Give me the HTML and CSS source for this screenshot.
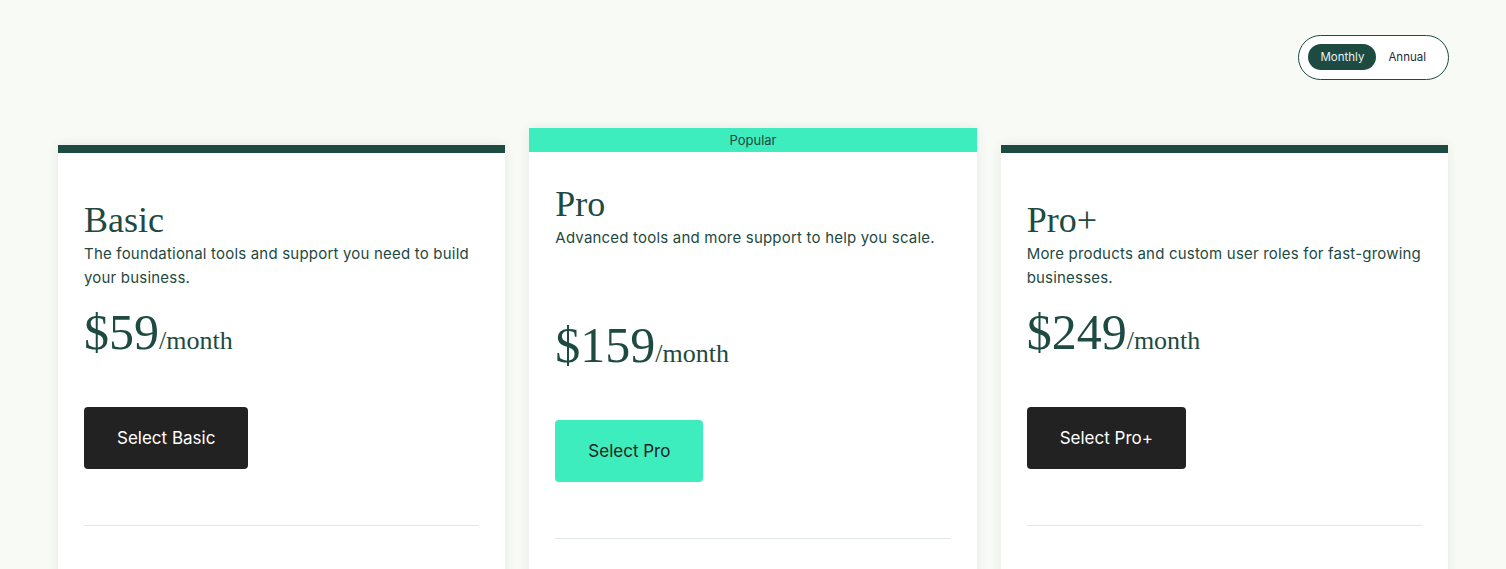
FILE: index.html
```html
<!DOCTYPE html>
<html lang="en">
<head>
<meta charset="utf-8">
<title>Pricing</title>
<link rel="stylesheet" href="styles.css">
</head>
<body>
<div class="page">
  <div class="toolbar">
    <div class="toggle">
      <span class="toggle-opt is-active">Monthly</span>
      <span class="toggle-opt">Annual</span>
    </div>
  </div>
  <div class="plans">
    <div class="card">
      <div class="card-bar"></div>
      <div class="card-body">
        <h2 class="plan-name">Basic</h2>
        <p class="plan-desc">The foundational tools and support you need to build your business.</p>
        <div class="price"><span class="amount">$59</span><span class="per">/month</span></div>
        <button class="btn btn-dark">Select Basic</button>
        <hr class="divider">
      </div>
    </div>
    <div class="card card-featured">
      <div class="card-banner">Popular</div>
      <div class="card-body">
        <h2 class="plan-name">Pro</h2>
        <p class="plan-desc">Advanced tools and more support to help you scale.</p>
        <div class="price"><span class="amount">$159</span><span class="per">/month</span></div>
        <button class="btn btn-teal">Select Pro</button>
        <hr class="divider">
      </div>
    </div>
    <div class="card">
      <div class="card-bar"></div>
      <div class="card-body">
        <h2 class="plan-name">Pro+</h2>
        <p class="plan-desc">More products and custom user roles for fast-growing businesses.</p>
        <div class="price"><span class="amount">$249</span><span class="per">/month</span></div>
        <button class="btn btn-dark">Select Pro+</button>
        <hr class="divider">
      </div>
    </div>
  </div>
</div>
</body>
</html>
```

FILE: styles.css
```css
html, body {
  margin: 0;
  padding: 0;
  background: #f8faf5;
  overflow: hidden;
}
.page {
  height: 569px;
  overflow: hidden;
  padding: 0 58px;
  font-family: "Inter", "Liberation Sans", sans-serif;
  color: #1d4a41;
}
.toolbar {
  display: flex;
  justify-content: flex-end;
  padding-top: 35px;
  margin-right: -1px;
}
.toggle {
  display: flex;
  border: 1px solid #1d4a41;
  border-radius: 24px;
  padding: 8px 10px 9px 9px;
  background: #ffffff;
}
.toggle-opt {
  display: flex;
  align-items: center;
  height: 26px;
  padding: 0 12px;
  border-radius: 13px;
  font-size: 11.5px;
  color: #1d2a3a;
}
.toggle-opt.is-active {
  background: #1d4a41;
  color: #e6f4ef;
}
.plans {
  display: grid;
  grid-template-columns: repeat(3, 1fr);
  gap: 24px;
  margin-top: 48px;
  align-items: start;
}
.card {
  background: #ffffff;
  box-shadow: 0 0 10px rgba(30, 70, 50, 0.09);
  margin-top: 17px;
  height: 600px;
}
.card-featured {
  margin-top: 0;
}
.card-bar {
  height: 8px;
  background: #1d4a41;
}
.card-banner {
  height: 24px;
  background: #3eedbe;
  color: #1d4a41;
  font-size: 13px;
  line-height: 24px;
  text-align: center;
}
.card-body {
  padding: 46px 26px 0 26px;
}
.card-featured .card-body {
  padding-top: 31px;
}
.plan-name {
  margin: 0;
  font-family: "Liberation Serif", serif;
  font-weight: 400;
  font-size: 36px;
  line-height: 43px;
  color: #1d4a41;
}
.plan-desc {
  margin: 0;
  font-size: 15px;
  line-height: 24px;
  letter-spacing: 0.2px;
  color: #1d4a41;
}
.price {
  margin-top: 17px;
  font-family: "Liberation Serif", serif;
  color: #1d4a41;
  line-height: 50px;
  height: 50px;
}
.card-featured .price {
  margin-top: 70px;
}
.amount {
  font-size: 50px;
}
.per {
  font-size: 26px;
}
.btn {
  display: block;
  margin-top: 50px;
  height: 62px;
  padding: 0 33px;
  border: none;
  border-radius: 4px;
  font-family: "Inter", "Liberation Sans", sans-serif;
  font-size: 17px;
  cursor: pointer;
}
.btn-dark {
  background: #222222;
  color: #ffffff;
}
.btn-teal {
  background: #3eedbe;
  color: #222222;
}
.divider {
  margin: 56px 0 0 0;
  border: none;
  border-top: 1px solid #dfe9e6;
}
```
